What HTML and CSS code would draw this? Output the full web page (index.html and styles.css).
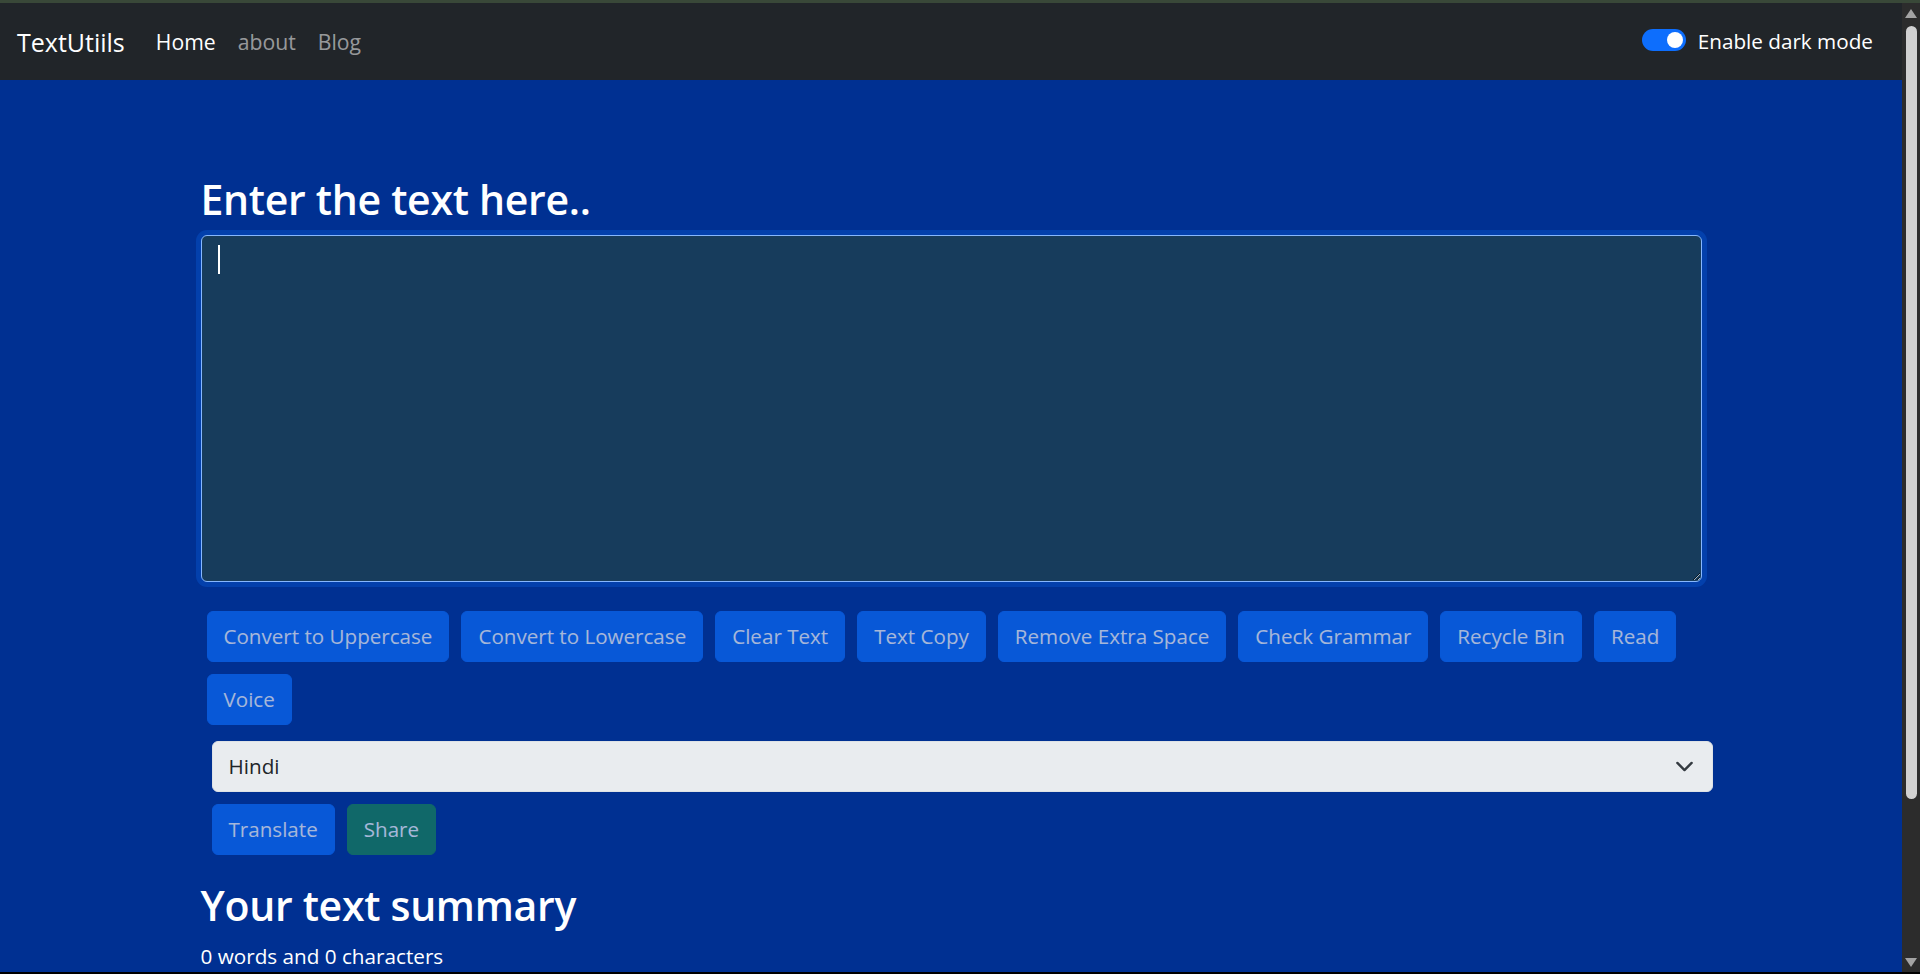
FILE: index.html
```html
<!DOCTYPE html>
<html lang="en">
<head>
<meta charset="utf-8">
<title>TextUtiils</title>
<link rel="stylesheet" href="styles.css">
</head>
<body>
<div class="frame">
  <div class="window">
    <div class="page">
      <nav class="navbar">
        <a class="brand" href="#">TextUtiils</a>
        <ul class="nav-links">
          <li><a class="nav-link active" href="#">Home</a></li>
          <li><a class="nav-link" href="#">about</a></li>
          <li><a class="nav-link" href="#">Blog</a></li>
        </ul>
        <div class="switch">
          <span class="switch-track"><span class="switch-knob"></span></span>
          <label class="switch-label">Enable dark mode</label>
        </div>
      </nav>
      <main class="container">
        <h1 class="title">Enter the text here..</h1>
        <div class="editor">
          <textarea class="textbox" rows="10"></textarea>
          <span class="caret"></span>
        </div>
        <div class="actions">
          <button class="btn">Convert to Uppercase</button>
          <button class="btn">Convert to Lowercase</button>
          <button class="btn">Clear Text</button>
          <button class="btn">Text Copy</button>
          <button class="btn">Remove Extra Space</button>
          <button class="btn">Check Grammar</button>
          <button class="btn">Recycle Bin</button>
          <button class="btn">Read</button>
          <button class="btn">Voice</button>
        </div>
        <div class="translate">
          <div class="select-wrap">
            <select class="lang-select"><option>Hindi</option></select>
            <svg class="chevron" viewBox="0 0 16 16" width="19" height="19"><path d="m2 5 6 6 6-6" fill="none" stroke="#343a40" stroke-width="2" stroke-linecap="round" stroke-linejoin="round"/></svg>
          </div>
          <div class="translate-actions">
            <button class="btn">Translate</button>
            <button class="btn btn-success">Share</button>
          </div>
        </div>
        <h2 class="summary-title">Your text summary</h2>
        <p class="summary">0 words and 0 characters</p>
      </main>
    </div>
    <div class="scrollbar">
      <svg class="arrow" viewBox="0 0 12 9" width="12" height="9"><polygon points="6,0 12,9 0,9" fill="#a3a3a3"/></svg>
      <div class="thumb"></div>
      <svg class="arrow arrow-down" viewBox="0 0 12 9" width="12" height="9"><polygon points="0,0 12,0 6,9" fill="#a3a3a3"/></svg>
    </div>
  </div>
</div>
</body>
</html>
```
FILE: styles.css
```css
* { box-sizing: border-box; }
html, body {
  margin: 0;
  height: 974px;
  overflow: hidden;
  background: #000;
  font-family: "Open Sans", "Noto Sans", sans-serif;
}
.frame {
  height: 974px;
  border-top: 3px solid #394838;
  padding-bottom: 2px;
  display: flex;
  flex-direction: column;
}
.window {
  flex: 1;
  display: flex;
  min-height: 0;
}
.page {
  flex: 1;
  background: #003092;
  overflow: hidden;
  display: flex;
  flex-direction: column;
}

/* navbar */
.navbar {
  height: 77px;
  flex: none;
  background: #212529;
  display: flex;
  align-items: center;
  padding: 0 29px 0 17px;
}
.brand {
  color: #fff;
  text-decoration: none;
  font-size: 25px;
  margin-right: 20px;
}
.nav-links {
  list-style: none;
  margin: 0;
  padding: 0;
  display: flex;
  flex: 1;
}
.nav-link {
  display: block;
  padding: 0 11px;
  font-size: 21.2px;
  color: rgba(255, 255, 255, 0.55);
  text-decoration: none;
}
.nav-link.active { color: #fff; }
.switch {
  display: flex;
  align-items: center;
  gap: 12px;
}
.switch-track {
  width: 44px;
  height: 22px;
  border-radius: 11px;
  background: #0d6efd;
  display: flex;
  align-items: center;
  justify-content: flex-end;
  padding-right: 3px;
  margin-top: -3px;
}
.switch-knob {
  width: 16px;
  height: 16px;
  border-radius: 50%;
  background: #fff;
}
.switch-label {
  color: #fff;
  font-size: 20.7px;
  margin-top: -1px;
}

/* main */
.container {
  width: 1501px;
  margin: 0 auto;
  padding-top: 94.5px;
  color: #fff;
}
.title {
  margin: 0 0 11.3px;
  font-size: 41px;
  font-weight: 600;
  line-height: 1.2;
  letter-spacing: -0.3px;
}
.editor {
  position: relative;
}
.textbox {
  display: block;
  width: 100%;
  height: 347px;
  margin: 0;
  background: #173c5c;
  border: 1px solid #86b7fe;
  border-radius: 6px;
  box-shadow: 0 0 0 5px rgba(13, 110, 253, 0.25);
  outline: none;
  color: #fff;
  font-family: inherit;
  font-size: 20.7px;
  padding: 8px 16px;
}
.caret {
  position: absolute;
  left: 17px;
  top: 10px;
  width: 2px;
  height: 29px;
  background: #fff;
}
.actions {
  margin-top: 29px;
  padding-left: 6px;
  display: flex;
  flex-wrap: wrap;
  gap: 12px 12px;
}
.btn {
  font-family: inherit;
  font-size: 20.6px;
  line-height: 32px;
  padding: 8.5px 16px;
  border: 1px solid #0d6efd;
  background: #0d6efd;
  color: #fff;
  border-radius: 6px;
  opacity: 0.65;
}
.btn-success {
  background: #198754;
  border-color: #198754;
}
.translate {
  width: 100%;
  margin: 16px 0 0 11px;
}
.select-wrap {
  position: relative;
}
.lang-select {
  display: block;
  width: 100%;
  height: 51px;
  appearance: none;
  -webkit-appearance: none;
  background: #e9ecef;
  border: 1px solid #dee2e6;
  border-radius: 6px;
  padding: 0 16px;
  font-family: inherit;
  font-size: 20.7px;
  color: #212529;
}
.chevron {
  position: absolute;
  right: 18.5px;
  top: 16px;
}
.translate-actions {
  margin-top: 12px;
  display: flex;
  gap: 12px;
}
.summary-title {
  margin: 26.5px 0 0;
  font-size: 41px;
  font-weight: 600;
  line-height: 1.2;
  letter-spacing: -0.3px;
}
.summary {
  margin: 10.7px 0 0;
  font-size: 20.7px;
  line-height: 1.5;
}

/* scrollbar */
.scrollbar {
  width: 18px;
  flex: none;
  background: #2c2c2c;
  display: flex;
  flex-direction: column;
  align-items: center;
  padding: 6px 0 5px;
}
.arrow { display: block; flex: none; }
.thumb {
  width: 11px;
  height: 773px;
  margin-top: 8px;
  border-radius: 6px;
  background: #d1d1d1;
  flex: none;
}
.arrow-down { margin-top: auto; }
```
